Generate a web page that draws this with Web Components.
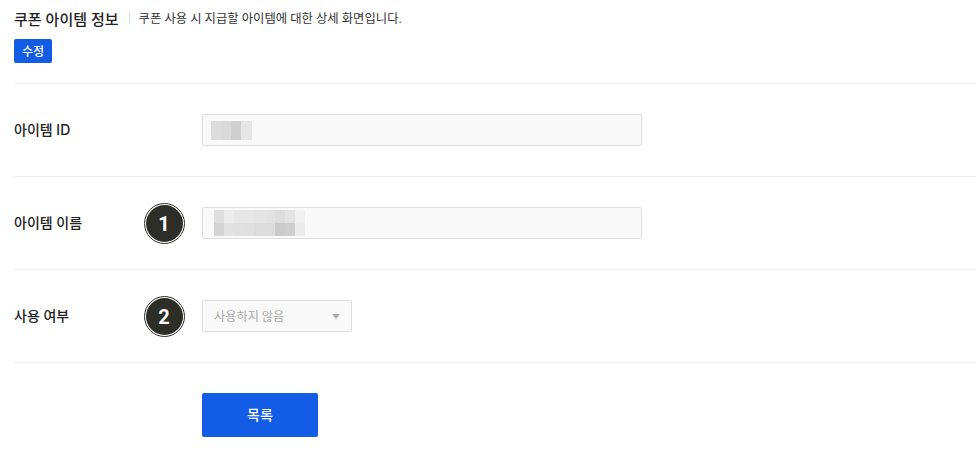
<!DOCTYPE html>
<html lang="ko">
<head>
<meta charset="utf-8">
<title>쿠폰 아이템 정보</title>
<style>
  html, body { margin: 0; background: #fff; }
  body {
    font-family: "Inter", "Noto Sans CJK KR", sans-serif;
    color: #222;
    overflow: hidden;
  }
</style>
</head>
<body>
<template id="page-head-tpl">
  <style>
    :host { display: block; padding: 9px 0 20px; }
    .title { display: flex; align-items: center; height: 18px; }
    .name { font-size: 15px; font-weight: 500; color: #222; }
    .sep { width: 1px; height: 12px; background: #ddd; margin: 0 9px 0 10px; }
    .desc { font-family: "Roboto", "Noto Sans CJK KR", sans-serif; font-size: 12.35px; color: #333; }
    .tools { margin-top: 12px; height: 24px; }
  </style>
  <div class="title">
    <span class="name"><slot name="name"></slot></span>
    <span class="sep"></span>
    <span class="desc"><slot name="desc"></slot></span>
  </div>
  <div class="tools"><slot name="tools"></slot></div>
</template>

<template id="form-row-tpl">
  <style>
    :host {
      display: grid;
      grid-template-columns: 188px 1fr;
      align-items: center;
      height: 92px;
      border-top: 1px solid #eee;
      position: relative;
    }
    .label { font-size: 14px; font-weight: 500; color: #222; padding-bottom: 3px; }
    ::slotted(step-badge) { position: absolute; left: 129.5px; top: 26px; }
  </style>
  <div class="label"><slot name="label"></slot></div>
  <div class="field"><slot></slot></div>
  <slot name="badge"></slot>
</template>

<template id="mosaic-field-tpl">
  <style>
    :host {
      display: flex;
      align-items: center;
      box-sizing: border-box;
      width: 440px;
      height: 32px;
      background: #f9f9f9;
      border: 1px solid #ddd;
      border-radius: 2px;
    }
    .blur { display: grid; margin-left: var(--mosaic-left, 8px); }
    .blur i { display: block; }
  </style>
  <div class="blur"></div>
</template>

<template id="select-box-tpl">
  <style>
    :host {
      display: flex;
      align-items: center;
      justify-content: space-between;
      box-sizing: border-box;
      width: 150px;
      height: 32px;
      padding: 0 11px;
      background: #f9f9f9;
      border: 1px solid #ddd;
      border-radius: 2px;
      font-family: "Roboto", "Noto Sans CJK KR", sans-serif;
      font-size: 12.2px;
      color: #aaa;
    }
    .arrow { width: 0; height: 0; border: 4px solid transparent; border-top: 5px solid #aaa; border-bottom: 0; }
  </style>
  <slot></slot>
  <span class="arrow"></span>
</template>

<template id="step-badge-tpl">
  <style>
    :host { display: block; width: 41px; height: 41px; }
    .ring {
      box-sizing: border-box;
      width: 41px; height: 41px;
      border-radius: 50%;
      border: 1px solid #2d2e27;
      padding: 1px;
      background: #fff;
    }
    .disc {
      display: flex; align-items: center; justify-content: center;
      width: 100%; height: 100%;
      border-radius: 50%;
      background: #2d2e27;
      color: #fff;
      font: 700 20px "Roboto", sans-serif;
    }
  </style>
  <div class="ring"><div class="disc"><slot></slot></div></div>
</template>

<template id="blue-btn-tpl">
  <style>
    :host {
      display: inline-flex;
      align-items: center;
      justify-content: center;
      box-sizing: border-box;
      background: #135de6;
      color: #fff;
      border-radius: 2px;
      font-weight: 500;
      font-size: 12px;
      width: 38px;
      height: 24px;
      padding-bottom: 1px;
    }
    :host([big]) { width: 116px; height: 44px; font-size: 14px; padding-bottom: 2px; }
  </style>
  <slot></slot>
</template>

<template id="coupon-page-tpl">
  <style>
    :host { display: block; padding-left: 14px; }
    .foot { border-top: 1px solid #eee; padding: 30px 0 0 188px; }
  </style>
  <slot></slot>
  <div class="foot"><slot name="foot"></slot></div>
</template>

<coupon-page>
  <page-head>
    <span slot="name">쿠폰 아이템 정보</span>
    <span slot="desc">쿠폰 사용 시 지급할 아이템에 대한 상세 화면입니다.</span>
    <blue-btn slot="tools">수정</blue-btn>
  </page-head>

  <form-row>
    <span slot="label">아이템 ID</span>
    <mosaic-field left="8" cell-h="19" widths="10,10,10,11" rows="dcdcdc,d9d9d9,cfcfcf,e6e6e6"></mosaic-field>
  </form-row>

  <form-row>
    <span slot="label">아이템 이름</span>
    <step-badge slot="badge">1</step-badge>
    <mosaic-field left="11" cell-h="13" widths="10,10,10,10,11,10,10,10,10"
      rows="dedede,ececec,e6e6e6,e6e6e6,e4e4e4,e2e2e2,dddddd,e3e3e3,f0f0f0;d4d4d4,e2e2e2,e0e0e0,dfdfdf,dcdcdc,dcdcdc,cbcbcb,cecece,ebebeb"></mosaic-field>
  </form-row>

  <form-row>
    <span slot="label">사용 여부</span>
    <step-badge slot="badge">2</step-badge>
    <select-box>사용하지 않음</select-box>
  </form-row>

  <blue-btn slot="foot" big>목록</blue-btn>
</coupon-page>

<script>
  // plain elements that only stamp their template
  function stamped(tag) {
    customElements.define(tag, class extends HTMLElement {
      constructor() {
        super();
        this.attachShadow({ mode: 'open' });
        this.shadowRoot.append(document.getElementById(tag + '-tpl').content.cloneNode(true));
      }
    });
  }
  ['page-head', 'form-row', 'select-box', 'step-badge', 'blue-btn', 'coupon-page'].forEach(stamped);

  // read-only input whose value was pixelated in the screenshot
  class MosaicField extends HTMLElement {
    constructor() {
      super();
      this.attachShadow({ mode: 'open' });
      this.shadowRoot.append(document.getElementById('mosaic-field-tpl').content.cloneNode(true));
    }

    connectedCallback() {
      const blur = this.shadowRoot.querySelector('.blur');
      const widths = this.getAttribute('widths').split(',');
      const h = this.getAttribute('cell-h');
      this.style.setProperty('--mosaic-left', this.getAttribute('left') + 'px');
      blur.style.gridTemplateColumns = widths.map(w => w + 'px').join(' ');
      blur.style.gridAutoRows = h + 'px';
      this.getAttribute('rows').split(';').forEach(row => {
        row.split(',').forEach(c => {
          const cell = document.createElement('i');
          cell.style.background = '#' + c;
          blur.append(cell);
        });
      });
    }
  }
  customElements.define('mosaic-field', MosaicField);
</script>
</body>
</html>
